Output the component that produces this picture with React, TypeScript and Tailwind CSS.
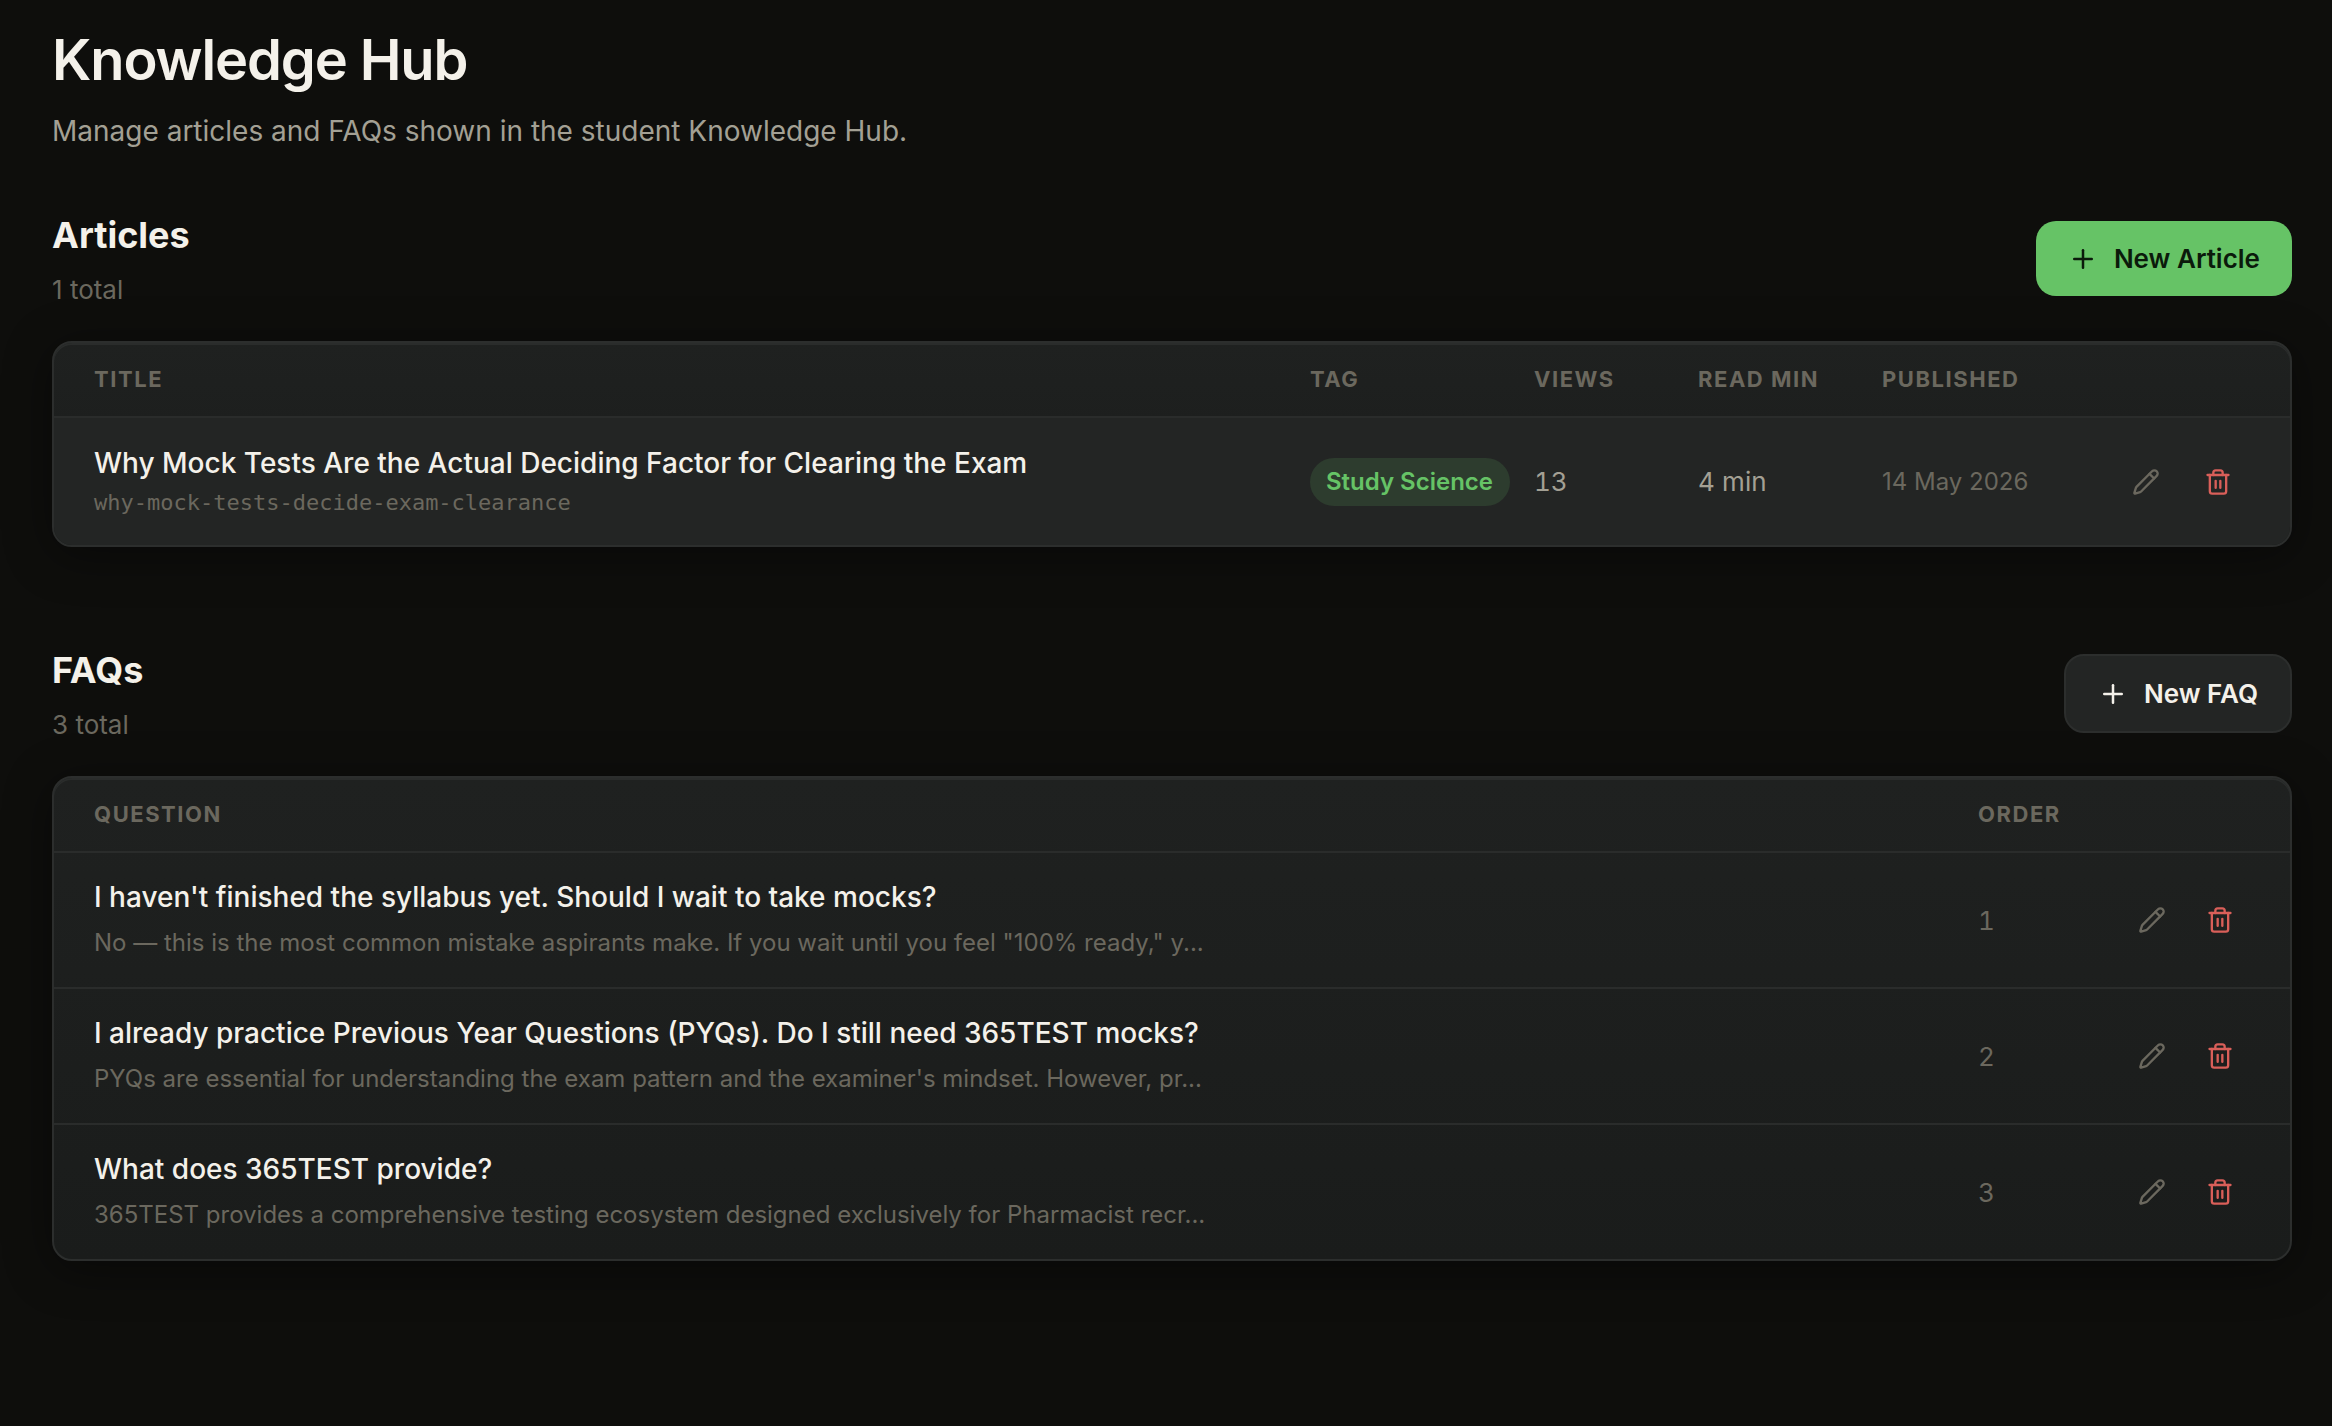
import type { ReactNode } from "react";
import { Pencil, Plus, Trash2 } from "lucide-react";

interface IArticle {
    id: number;
    title: string;
    slug: string;
    tag: string;
    views: number;
    readMin: number;
    published: string;
}

interface IFaq {
    id: number;
    question: string;
    answer: string;
    order: number;
}

const articles: IArticle[] = [
    {
        id: 1,
        title: "Why Mock Tests Are the Actual Deciding Factor for Clearing the Exam",
        slug: "why-mock-tests-decide-exam-clearance",
        tag: "Study Science",
        views: 13,
        readMin: 4,
        published: "14 May 2026",
    },
];

const faqs: IFaq[] = [
    {
        id: 1,
        question: "I haven't finished the syllabus yet. Should I wait to take mocks?",
        answer: 'No — this is the most common mistake aspirants make. If you wait until you feel "100% ready," y...',
        order: 1,
    },
    {
        id: 2,
        question: "I already practice Previous Year Questions (PYQs). Do I still need 365TEST mocks?",
        answer: "PYQs are essential for understanding the exam pattern and the examiner's mindset. However, pr...",
        order: 2,
    },
    {
        id: 3,
        question: "What does 365TEST provide?",
        answer: "365TEST provides a comprehensive testing ecosystem designed exclusively for Pharmacist recr...",
        order: 3,
    },
];

function SectionHeader({ title, total, children }: { title: string; total: number; children: ReactNode }) {
    return (
        <div className="flex h-[91px] items-center justify-between">
            <div>
                <h2 className="text-[36px] leading-[44px] font-bold text-[#f4f1ea]">{title}</h2>
                <p className="mt-[18px] text-[26px] leading-[29px] text-[#6b685e]">{total} total</p>
            </div>
            {children}
        </div>
    );
}

function Card({ children }: { children: ReactNode }) {
    return (
        <div className="mt-[37px] overflow-hidden rounded-[20px] border-2 border-[#2c2e2d] bg-linear-to-b from-[#1f2120] to-[#1a1c1b] shadow-[inset_0_2px_0_#2a2c2b,0_8px_48px_rgba(0,0,0,0.4)]">
            {children}
        </div>
    );
}

export default function App() {
    return (
        <main className="h-[1426px] overflow-hidden bg-[#0e0e0c] px-[52px] pr-10 pt-[26px] font-['Inter',sans-serif]">
            <h1 className="text-[56px] leading-[68px] font-semibold tracking-[-0.02em] text-[#f4f1ea]">Knowledge Hub</h1>
            <p className="mt-4 text-[28px] leading-[42px] text-[#a3a094]">
                Manage articles and FAQs shown in the student Knowledge Hub.
            </p>

            <section className="mt-[61px]">
                <SectionHeader title="Articles" total={articles.length}>
                    <button className="flex h-[75px] items-center gap-4 rounded-[20px] bg-[#66c366] px-8 text-[26px] font-semibold text-[#0b1a0b]">
                        <Plus size={30} strokeWidth={2} />
                        New Article
                    </button>
                </SectionHeader>
                <Card>
                    <div className="grid h-[75px] grid-cols-[1216px_224px_164px_184px_1fr] items-center border-b-2 border-[#2a2c2b] pl-10 text-[22px] font-bold tracking-[0.07em] text-[#6b685e]">
                        <span>TITLE</span>
                        <span>TAG</span>
                        <span>VIEWS</span>
                        <span>READ MIN</span>
                        <span>PUBLISHED</span>
                    </div>
                    {articles.map((article) => (
                        <div
                            key={article.id}
                            className="grid h-[127px] grid-cols-[1216px_224px_164px_184px_1fr_auto] items-center bg-[#232524] pr-[58px] pl-10"
                        >
                            <div>
                                <p className="text-[28px] leading-[42px] font-medium text-[#f4f1ea]">{article.title}</p>
                                <p className="mt-0.5 pb-0.5 font-['DejaVu_Sans_Mono',monospace] text-[22px] leading-[33px] text-[#6b685e]">
                                    {article.slug}
                                </p>
                            </div>
                            <div className="flex">
                                <span className="flex h-12 items-center rounded-full bg-[#2d3c2e] pr-[17px] pl-4 text-[24px] font-semibold text-[#66c366]">
                                    {article.tag}
                                </span>
                            </div>
                            <span className="text-[26px] text-[#a3a094] tabular-nums">{article.views}</span>
                            <span className="text-[26px] text-[#a3a094]">{article.readMin} min</span>
                            <span className="text-[24px] text-[#6b685e]">{article.published}</span>
                            <div className="flex gap-11">
                                <button aria-label="Edit">
                                    <Pencil size={28} strokeWidth={2} className="text-[#6b685e]" />
                                </button>
                                <button aria-label="Delete">
                                    <Trash2 size={28} strokeWidth={2} className="text-[#d95f59]" />
                                </button>
                            </div>
                        </div>
                    ))}
                </Card>
            </section>

            <section className="mt-[101px]">
                <SectionHeader title="FAQs" total={faqs.length}>
                    <button className="flex h-[79px] items-center gap-4 rounded-[20px] border-2 border-[#2c2e2d] bg-[#232524] px-8 text-[26px] font-semibold text-[#f4f1ea]">
                        <Plus size={30} strokeWidth={2} />
                        New FAQ
                    </button>
                </SectionHeader>
                <Card>
                    <div className="grid h-[75px] grid-cols-[1884px_1fr] items-center border-b-2 border-[#2a2c2b] pl-10 text-[22px] font-bold tracking-[0.07em] text-[#6b685e]">
                        <span>QUESTION</span>
                        <span>ORDER</span>
                    </div>
                    {faqs.map((faq) => (
                        <div
                            key={faq.id}
                            className="grid h-[136px] grid-cols-[1884px_1fr_auto] items-center border-b-2 border-[#2a2c2b] pr-14 pl-10 last:h-[134px] last:border-b-0"
                        >
                            <div>
                                <p className="text-[28px] leading-[36px] font-medium text-[#f4f1ea]">{faq.question}</p>
                                <p className="mt-[10px] text-[24px] leading-[36px] text-[#6b685e]">{faq.answer}</p>
                            </div>
                            <span className="text-[26px] text-[#6b685e] tabular-nums">{faq.order}</span>
                            <div className="flex gap-10">
                                <button aria-label="Edit">
                                    <Pencil size={28} strokeWidth={2} className="text-[#6b685e]" />
                                </button>
                                <button aria-label="Delete">
                                    <Trash2 size={28} strokeWidth={2} className="text-[#d95f59]" />
                                </button>
                            </div>
                        </div>
                    ))}
                </Card>
            </section>
        </main>
    );
}
